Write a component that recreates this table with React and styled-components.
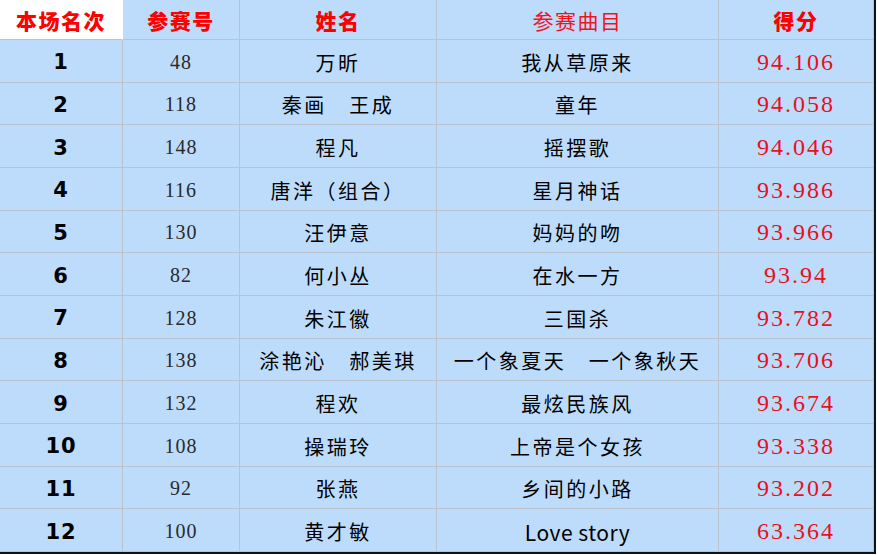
import React from 'react';
import styled, { createGlobalStyle } from 'styled-components';

const rows = [
  [1, 48, '万昕', '我从草原来', '94.106'],
  [2, 118, '秦画\u3000王成', '童年', '94.058'],
  [3, 148, '程凡', '摇摆歌', '94.046'],
  [4, 116, '唐洋（组合）', '星月神话', '93.986'],
  [5, 130, '汪伊意', '妈妈的吻', '93.966'],
  [6, 82, '何小丛', '在水一方', '93.94'],
  [7, 128, '朱江徽', '三国杀', '93.782'],
  [8, 138, '涂艳沁\u3000郝美琪', '一个象夏天\u3000一个象秋天', '93.706'],
  [9, 132, '程欢', '最炫民族风', '93.674'],
  [10, 108, '操瑞玲', '上帝是个女孩', '93.338'],
  [11, 92, '张燕', '乡间的小路', '93.202'],
  [12, 100, '黄才敏', 'Love story', '63.364'],
];

const GlobalStyle = createGlobalStyle`
  html, body {
    margin: 0;
    padding: 0;
    background: #fff;
  }
`;

const Sheet = styled.div`
  box-sizing: border-box;
  width: 876px;
  height: 554px;
  display: grid;
  grid-template-columns: 123px 117px 197px 282px 155px;
  grid-template-rows: 40px repeat(12, 1fr);
  border-right: 2px solid #111;
  border-bottom: 2px solid #111;
  background: #bddcfb;
`;

const Cell = styled.div`
  box-sizing: border-box;
  display: flex;
  align-items: center;
  justify-content: center;
  padding-top: 3px;
  border-right: 1px solid #b9c3cd;
  border-bottom: 1px solid #b9c3cd;
  white-space: nowrap;
  color: #000;
`;

const HeadCell = styled(Cell)`
  padding-top: 1px;
  background: ${(p) => (p.$white ? '#fff' : 'transparent')};
  border-right-color: ${(p) => (p.$white ? '#fff' : '#b9c3cd')};
  color: ${(p) => (p.$light ? '#f0141e' : '#ff0000')};
  font-family: 'Noto Sans CJK SC', sans-serif;
  font-size: 21px;
  font-weight: ${(p) => (p.$light ? 400 : 900)};
  letter-spacing: 1.5px;
`;

const RankCell = styled(Cell)`
  font-family: 'DejaVu Sans', Verdana, sans-serif;
  font-weight: 700;
  font-size: 21px;
  letter-spacing: 1px;
`;

const NumCell = styled(Cell)`
  font-family: 'Liberation Serif', serif;
  font-size: 20px;
  letter-spacing: 1px;
  color: #2a2a2a;
`;

const NameCell = styled(Cell)`
  font-family: 'Noto Sans CJK SC', sans-serif;
  font-size: 20px;
  letter-spacing: 2.5px;
`;

const SongCell = styled(Cell)`
  font-family: 'Noto Sans CJK SC', sans-serif;
  font-size: ${(p) => (p.$latin ? '21px' : '20px')};
  letter-spacing: ${(p) => (p.$latin ? '0.5px' : '2.5px')};
`;

const ScoreCell = styled(Cell)`
  font-family: 'Liberation Serif', serif;
  font-size: 24px;
  letter-spacing: 2px;
  color: #e8101c;
`;

const App = () => {
  return (
    <>
      <GlobalStyle />
      <Sheet>
        <HeadCell $white>本场名次</HeadCell>
        <HeadCell>参赛号</HeadCell>
        <HeadCell>姓名</HeadCell>
        <HeadCell $light>参赛曲目</HeadCell>
        <HeadCell>得分</HeadCell>
        {rows.map(([rank, num, name, song, score]) => (
          <React.Fragment key={rank}>
            <RankCell>{rank}</RankCell>
            <NumCell>{num}</NumCell>
            <NameCell>{name}</NameCell>
            <SongCell $latin={/^[A-Za-z ]+$/.test(song)}>{song}</SongCell>
            <ScoreCell>{score}</ScoreCell>
          </React.Fragment>
        ))}
      </Sheet>
    </>
  );
};

export default App;
